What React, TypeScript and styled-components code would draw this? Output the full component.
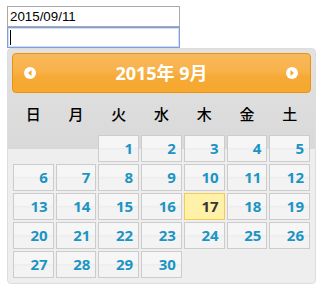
import React from "react";
import styled, { createGlobalStyle } from "styled-components";

const GlobalStyle = createGlobalStyle`
  html, body { margin: 0; padding: 0; background: #ffffff; }
`;

const Page = styled.div`
  padding: 6px 0 0 7px;
  display: flex;
  flex-direction: column;
  align-items: flex-start;
  font-family: "Liberation Sans", Arial, sans-serif;
`;

const TextInput = styled.input`
  box-sizing: border-box;
  width: 173px;
  height: 21px;
  margin: 0;
  padding: 1px 2px;
  border: 1px solid #a9a9a9;
  font-family: "Liberation Sans", Arial, sans-serif;
  font-size: 13.33px;
  color: #000;
  outline: none;
`;

const FocusedField = styled.div`
  box-sizing: border-box;
  width: 173px;
  height: 21px;
  border: 1px solid #7e9fdc;
  box-shadow: inset 0 0 0 1px rgba(126, 159, 220, 0.35);
  display: flex;
  align-items: center;
  padding-left: 2px;
`;

const Caret = styled.span`
  display: block;
  width: 1px;
  height: 15px;
  background: #000;
`;

const Picker = styled.div`
  box-sizing: border-box;
  width: 309px;
  margin-top: 0;
  padding: 4px;
  border: 1px solid #dddddd;
  border-radius: 4px;
  background: linear-gradient(to bottom, #e2e2e2 0px, #d9d9d9 100px, #eeeeee 100px, #eeeeee 100%);
`;

const Header = styled.div`
  box-sizing: border-box;
  height: 40px;
  border: 1px solid #e89410;
  border-radius: 4px;
  background: linear-gradient(to bottom, #f9b95a 0%, #f8b24a 45%, #f6aa35 60%, #f6a82e 100%);
  display: flex;
  align-items: center;
  justify-content: space-between;
  padding: 0 12px 0 11px;
`;

const NavButton = styled.span`
  display: flex;
  width: 12px;
  height: 12px;
`;

const Title = styled.div`
  color: #ffffff;
  font-family: "Open Sans", "Noto Sans CJK JP", sans-serif;
  font-weight: 700;
  font-size: 18px;
  line-height: 20px;
  padding-left: 1px;
`;

const Grid = styled.div`
  display: grid;
  grid-template-columns: repeat(7, 1fr);
  grid-template-rows: 41px repeat(5, 29px);
`;

const DayName = styled.div`
  display: flex;
  align-items: center;
  justify-content: center;
  font-family: "Noto Sans CJK JP", sans-serif;
  font-size: 15px;
  font-weight: 500;
  color: #000;
`;

const Slot = styled.div`
  padding: 1px;
`;

const DayCell = styled.div<{ $today?: boolean }>`
  box-sizing: border-box;
  height: 27px;
  border: 1px solid ${(p) => (p.$today ? "#f4cd4e" : "#cccccc")};
  background: ${(p) =>
    p.$today
      ? "#fff1a8"
      : "linear-gradient(to bottom, #f6f6f6 0%, #f6f6f6 45%, #eeeeee 50%, #f3f3f3 60%, #f3f3f3 100%)"};
  color: ${(p) => (p.$today ? "#363636" : "#1c94c4")};
  font-family: "Open Sans", sans-serif;
  font-weight: 700;
  font-size: 15px;
  line-height: 25px;
  text-align: right;
  padding-right: 5px;
`;

const Arrow = ({ dir }: { dir: "w" | "e" }) => (
  <svg width="12" height="12" viewBox="0 0 12 12">
    <circle cx="6" cy="6" r="6" fill="#ffffff" />
    {dir === "w" ? (
      <polygon points="7.5,3 7.5,9 4,6" fill="#f6a828" />
    ) : (
      <polygon points="4.5,3 4.5,9 8,6" fill="#f6a828" />
    )}
  </svg>
);

const names = ["日", "月", "火", "水", "木", "金", "土"];

export default function App() {
  const cells: (number | null)[] = [null, null];
  for (let d = 1; d <= 30; d++) cells.push(d);
  while (cells.length < 35) cells.push(null);

  return (
    <>
      <GlobalStyle />
      <Page>
        <TextInput defaultValue="2015/09/11" readOnly />
        <FocusedField>
          <Caret />
        </FocusedField>
        <Picker>
          <Header>
            <NavButton>
              <Arrow dir="w" />
            </NavButton>
            <Title>2015年 9月</Title>
            <NavButton>
              <Arrow dir="e" />
            </NavButton>
          </Header>
          <Grid>
            {names.map((n) => (
              <DayName key={n}>{n}</DayName>
            ))}
            {cells.map((d, i) => (
              <Slot key={i}>
                {d !== null && <DayCell $today={d === 17}>{d}</DayCell>}
              </Slot>
            ))}
          </Grid>
        </Picker>
      </Page>
    </>
  );
}
